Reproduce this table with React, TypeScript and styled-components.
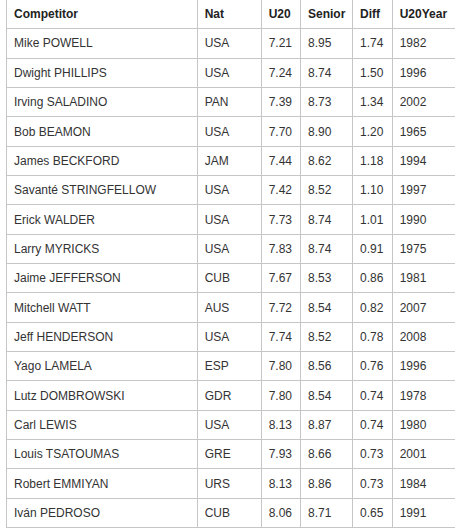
import * as React from "react";
import styled, { createGlobalStyle } from "styled-components";

const GlobalStyle = createGlobalStyle`
  html, body {
    margin: 0;
    padding: 0;
    background: #fff;
    overflow: hidden;
  }
  body {
    font-family: "Liberation Sans", Arial, sans-serif;
  }
`;

const Wrapper = styled.div`
  padding-left: 6px;
  width: 449px;
  overflow: hidden;
`;

const Table = styled.table`
  border-collapse: collapse;
  table-layout: fixed;
  width: 450.2px;
  font-family: "Liberation Sans", Arial, sans-serif;
  font-size: 12px;
  color: #333;
`;

const HeadCell = styled.th`
  height: 28.8px;
  padding: 0 7px;
  text-align: left;
  font-weight: bold;
  color: #222;
  border: 1px solid #c6c6c6;
  border-top: none;
  box-sizing: border-box;
`;

const Cell = styled.td`
  height: 29.35px;
  padding: 0 7px;
  text-align: left;
  border: 1px solid #c6c6c6;
  box-sizing: border-box;
  white-space: nowrap;
`;

type Row = [string, string, string, string, string, string];

const rows: Row[] = [
  ["Mike POWELL", "USA", "7.21", "8.95", "1.74", "1982"],
  ["Dwight PHILLIPS", "USA", "7.24", "8.74", "1.50", "1996"],
  ["Irving SALADINO", "PAN", "7.39", "8.73", "1.34", "2002"],
  ["Bob BEAMON", "USA", "7.70", "8.90", "1.20", "1965"],
  ["James BECKFORD", "JAM", "7.44", "8.62", "1.18", "1994"],
  ["Savanté STRINGFELLOW", "USA", "7.42", "8.52", "1.10", "1997"],
  ["Erick WALDER", "USA", "7.73", "8.74", "1.01", "1990"],
  ["Larry MYRICKS", "USA", "7.83", "8.74", "0.91", "1975"],
  ["Jaime JEFFERSON", "CUB", "7.67", "8.53", "0.86", "1981"],
  ["Mitchell WATT", "AUS", "7.72", "8.54", "0.82", "2007"],
  ["Jeff HENDERSON", "USA", "7.74", "8.52", "0.78", "2008"],
  ["Yago LAMELA", "ESP", "7.80", "8.56", "0.76", "1996"],
  ["Lutz DOMBROWSKI", "GDR", "7.80", "8.54", "0.74", "1978"],
  ["Carl LEWIS", "USA", "8.13", "8.87", "0.74", "1980"],
  ["Louis TSATOUMAS", "GRE", "7.93", "8.66", "0.73", "2001"],
  ["Robert EMMIYAN", "URS", "8.13", "8.86", "0.73", "1984"],
  ["Iván PEDROSO", "CUB", "8.06", "8.71", "0.65", "1991"],
];

const headers = ["Competitor", "Nat", "U20", "Senior", "Diff", "U20Year"];
const widths = [190.7, 64, 39.3, 52, 39.7, 64.5];

const App = () => {
  return (
    <Wrapper>
      <GlobalStyle />
      <Table>
        <colgroup>
          {widths.map((w, i) => (
            <col key={i} style={{ width: w }} />
          ))}
        </colgroup>
        <thead>
          <tr>
            {headers.map((h) => (
              <HeadCell key={h}>{h}</HeadCell>
            ))}
          </tr>
        </thead>
        <tbody>
          {rows.map((r) => (
            <tr key={r[0]}>
              {r.map((v, i) => (
                <Cell key={i}>{v}</Cell>
              ))}
            </tr>
          ))}
        </tbody>
      </Table>
    </Wrapper>
  );
};

export default App;
